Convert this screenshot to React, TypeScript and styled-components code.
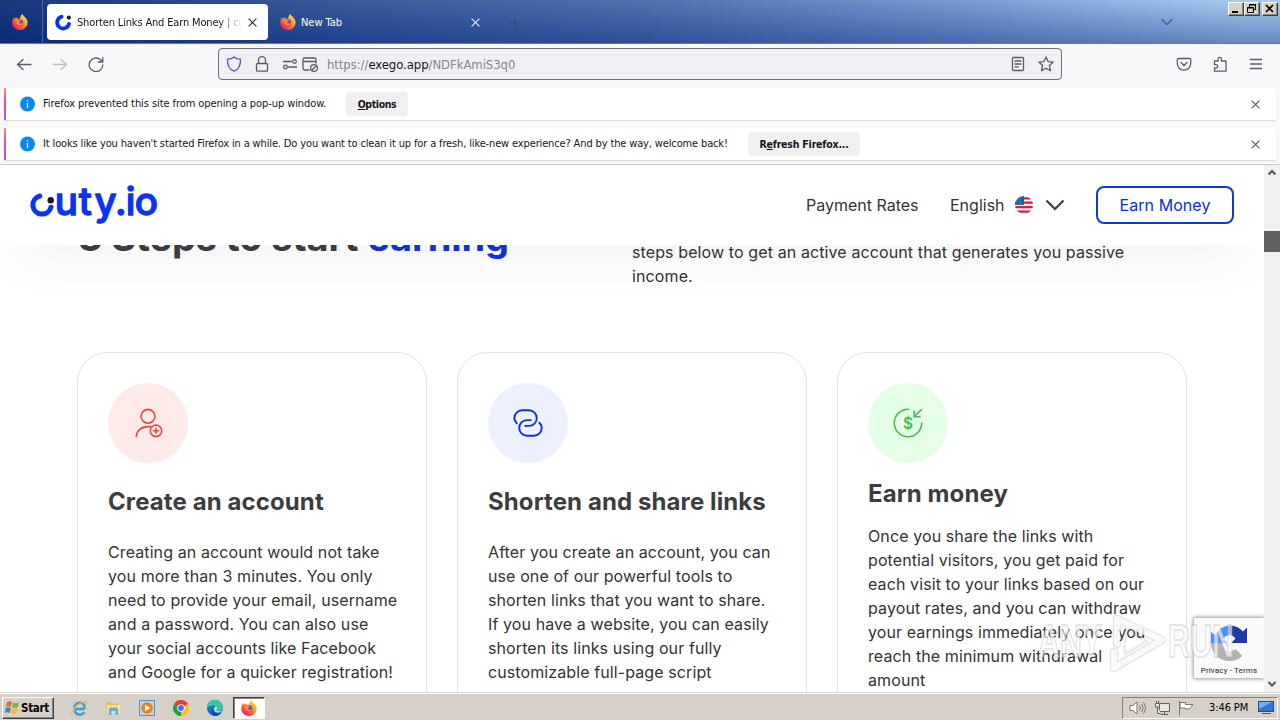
import React from "react";
import styled, { createGlobalStyle } from "styled-components";

const Global = createGlobalStyle`
  * { box-sizing: border-box; }
  body { margin: 0; overflow: hidden; background: #fff; }
  svg { display: block; flex: none; }
  p, h1, h2 { margin: 0; }
`;

const ui = `"DejaVu Sans Condensed", "DejaVu Sans", sans-serif`;

const Desktop = styled.div`
  width: 1280px;
  height: 720px;
  display: flex;
  flex-direction: column;
  overflow: hidden;
  font-family: Inter, sans-serif;
  color: #333;
`;

/* ---------- browser chrome ---------- */

const TabStrip = styled.div`
  height: 44px;
  flex: none;
  display: flex;
  align-items: flex-start;
  border-bottom: 1px solid #6c7590;
  background:
    linear-gradient(180deg, rgba(255, 255, 255, 0.06), rgba(10, 45, 130, 0.42)),
    linear-gradient(92deg, #0c2c74 0%, #14357c 8%, #2c4e93 25%, #4668a8 50%, #7195cd 75%, #a3c9f0 97%);
  font-family: ${ui};
`;

const PinnedArea = styled.div`
  width: 43px;
  height: 43px;
  padding: 14px 0 0 12px;
  border-right: 1px solid #4c62a0;
`;

const Tab = styled.div<{ $active?: boolean; $width: number }>`
  width: ${(p) => p.$width}px;
  height: 36px;
  margin: 4px 0 0 4px;
  padding: 0 11px 0 8px;
  display: flex;
  align-items: center;
  gap: 5px;
  border-radius: 4px;
  font-size: 11px;
  color: ${(p) => (p.$active ? "#15141a" : "#fff")};
  background: ${(p) => (p.$active ? "#fff" : "transparent")};
`;

const TabTitle = styled.span<{ $fade?: boolean; $track: number }>`
  flex: 1;
  margin-top: 2px;
  overflow: hidden;
  white-space: nowrap;
  line-height: 16px;
  letter-spacing: ${(p) => p.$track}px;
  ${(p) => p.$fade && "mask-image: linear-gradient(90deg, #000 85%, transparent 100%);"}
`;

const NewTabButton = styled.div`
  padding: 18px 0 0 19px;
`;

const TabListButton = styled.div`
  margin: 18px 55px 0 auto;
`;

const WindowButtons = styled.div`
  display: flex;
  padding: 2px 2px 0 0;
`;

const WindowButton = styled.div<{ $gap?: number }>`
  width: 16px;
  height: 14px;
  margin-left: ${(p) => p.$gap ?? 0}px;
  background: #d6d2c8;
  border: 1px solid;
  border-color: #fff #404040 #404040 #fff;
  box-shadow: inset -1px -1px 0 #8a867e;
`;

const Toolbar = styled.div`
  height: 40px;
  flex: none;
  display: flex;
  align-items: center;
  background: #f8f8fb;
  padding: 0 16px;
`;

const NavButtons = styled.div`
  width: 202px;
  display: flex;
  gap: 20px;
`;

const AddressBar = styled.div`
  width: 844px;
  height: 32px;
  display: flex;
  align-items: center;
  padding: 0 7px;
  border: 1px solid #6f6f7a;
  border-radius: 4px;
  background: #f0f0f4;
`;

const AddressIcons = styled.div<{ $gap: number }>`
  display: flex;
  align-items: center;
  gap: ${(p) => p.$gap}px;
`;

const SiteIcons = styled.div`
  display: flex;
  gap: 4px;
  margin-left: 12px;
`;

const Url = styled.div`
  flex: 1;
  margin: 2px 0 0 9px;
  font: 13px/18px ${ui};
  letter-spacing: -0.07px;
  color: #85858c;
  white-space: nowrap;
  b { font-weight: 400; color: #15141a; }
`;

const ToolIcons = styled.div`
  display: flex;
  gap: 20px;
  margin-left: auto;
`;

const Notices = styled.div`
  flex: none;
  height: 81px;
  padding: 4px 4px 0;
  display: flex;
  flex-direction: column;
  gap: 8px;
  background: #f8f8fa;
  border-bottom: 1px solid #c9c9cd;
`;

const Notice = styled.div`
  height: 32px;
  flex: none;
  display: flex;
  align-items: center;
  padding: 0 16px 0 13px;
  background: #fff;
  border-left: 2px solid;
  border-image: linear-gradient(180deg, #ff9a5a, #e2489c 45%, #a259f7) 1;
  box-shadow: 0 1px 1px rgba(58, 57, 68, 0.14);
  font: 11px/14px ${ui};
  color: #15141a;
`;

const NoticeText = styled.span<{ $width: number; $track: number }>`
  width: ${(p) => p.$width}px;
  margin-left: 8px;
  white-space: nowrap;
  letter-spacing: ${(p) => p.$track}px;
`;

const NoticeButton = styled.span<{ $width: number; $track: number }>`
  width: ${(p) => p.$width}px;
  height: 24px;
  border-radius: 4px;
  background: #f0f0f1;
  font-weight: 700;
  font-size: 10.5px;
  letter-spacing: ${(p) => p.$track}px;
  line-height: 25px;
  text-align: center;
  white-space: nowrap;
`;

const NoticeClose = styled.div`
  margin-left: auto;
`;

/* ---------- web page ---------- */

const Viewport = styled.div`
  height: 527px;
  flex: none;
  display: flex;
  position: relative;
`;

const Page = styled.div`
  width: 1264px;
  height: 527px;
  overflow: hidden;
  background: #fff;
`;

const SiteHeader = styled.header`
  position: relative;
  z-index: 2;
  height: 80px;
  display: flex;
  align-items: center;
  padding: 0 30px;
  background: #fff;
  box-shadow: 0 28px 56px -22px rgba(0, 0, 0, 0.08);
  font-size: 16px;
  line-height: 24px;
`;

const SiteNav = styled.nav`
  margin-left: auto;
  display: flex;
  align-items: center;
`;

const NavText = styled.span<{ $width: number }>`
  width: ${(p) => p.$width}px;
  white-space: nowrap;
`;

const Chevron = styled.div`
  margin: 0 31px 0 12px;
`;

const EarnButton = styled.button`
  width: 138px;
  height: 38px;
  padding: 0;
  border: 2px solid #0c3ad2;
  border-radius: 8px;
  background: #fff;
  color: #0a2fd6;
  font: 16px/24px Inter, sans-serif;
  letter-spacing: 0.06px;
`;

const Intro = styled.section`
  height: 137px;
  margin-top: -30px;
  padding-left: 78px;
  display: flex;
`;

const Heading = styled.h1`
  width: 554px;
  margin-top: -1px;
  font-size: 38px;
  line-height: 46px;
  font-weight: 700;
  letter-spacing: -0.12px;
  color: #3d3d3f;
  white-space: nowrap;
  span { color: #0f34dc; }
`;

const IntroText = styled.p`
  padding-top: 25px;
  font-size: 16px;
  line-height: 24px;
  letter-spacing: 0.11px;
  white-space: pre;
`;

const Cards = styled.section`
  display: flex;
  gap: 30px;
  padding-left: 77px;
`;

const Card = styled.article`
  width: 350px;
  height: 400px;
  padding: 30px;
  border: 1px solid #e2e2e4;
  border-radius: 30px;
`;

const IconDisc = styled.div<{ $tint: string }>`
  width: 80px;
  height: 80px;
  display: flex;
  align-items: center;
  justify-content: center;
  border-radius: 50%;
  background: ${(p) => p.$tint};
`;

const CardTitle = styled.h2<{ $compact?: boolean }>`
  margin: ${(p) => (p.$compact ? "16px 0 16px" : "24px 0 24px")};
  font-size: 24px;
  line-height: 29px;
  font-weight: 700;
  letter-spacing: 0.1px;
  color: #3d3d3f;
  white-space: nowrap;
`;

const CardText = styled.p`
  font-size: 16px;
  line-height: 24px;
  letter-spacing: 0.1px;
  white-space: pre;
`;

const Scrollbar = styled.div`
  width: 16px;
  display: flex;
  flex-direction: column;
  align-items: center;
  background: #f0f0f0;
`;

const ScrollThumb = styled.div`
  width: 16px;
  height: 21px;
  margin: 50px 0 auto;
  background: #606060;
`;

const Captcha = styled.div`
  position: absolute;
  z-index: 3;
  left: 1194px;
  top: 453px;
  width: 70px;
  height: 60px;
  padding-top: 5px;
  display: flex;
  flex-direction: column;
  align-items: center;
  gap: 3px;
  background: #fafafa;
  box-shadow: 0 0 4px 1px #999;
  clip-path: inset(-6px 0 -6px -6px);
  font: 8px/10px Roboto, sans-serif;
  letter-spacing: 0.15px;
  color: #222;
  white-space: nowrap;
`;

const Watermark = styled.div`
  position: absolute;
  z-index: 4;
  left: 1034px;
  top: 440px;
`;

/* ---------- taskbar ---------- */

const Taskbar = styled.div`
  height: 28px;
  flex: none;
  display: flex;
  align-items: center;
  padding: 2px 2px 0;
  background: #d6d0c8;
  border-top: 1px solid #d9d6cf;
  box-shadow: inset 0 1px 0 #fff;
  font: 11px/14px ${ui};
  color: #000;
`;

const StartButton = styled.div`
  width: 52px;
  height: 22px;
  display: flex;
  align-items: center;
  gap: 0;
  padding-left: 1px;
  border: 1px solid;
  border-color: #fff #404040 #404040 #fff;
  box-shadow: inset -1px -1px 0 #8a867e;
  font-weight: 700;
  font-size: 11.5px;
  letter-spacing: -0.3px;
`;

const QuickLaunch = styled.div`
  display: flex;
  gap: 18px;
  margin-left: 17px;
`;

const ActiveTask = styled.div`
  width: 32px;
  height: 22px;
  margin-left: 10px;
  display: flex;
  align-items: center;
  justify-content: center;
  background: #fff;
  border: 1px solid;
  border-color: #404040 #fff #fff #404040;
  box-shadow: inset 1px 1px 0 #8a867e;
`;

const Tray = styled.div`
  width: 156px;
  height: 22px;
  margin-left: auto;
  display: flex;
  align-items: center;
  gap: 8px;
  padding: 0 2px 0 6px;
  border: 1px solid;
  border-color: #85817a #fff #fff #85817a;
`;

const Clock = styled.span`
  width: 44px;
  margin-left: 7px;
  white-space: nowrap;
  letter-spacing: -0.1px;
`;

/* ---------- drawings ---------- */

const FirefoxIcon = ({ size = 16 }: { size?: number }) => (
  <svg width={size} height={size} viewBox="0 0 16 16">
    <defs>
      <linearGradient id="ffBody" x1="0.85" y1="0.1" x2="0.2" y2="0.9">
        <stop offset="0" stopColor="#ffe14a" />
        <stop offset="0.4" stopColor="#ff9a2c" />
        <stop offset="0.75" stopColor="#ff4a45" />
        <stop offset="1" stopColor="#e8246c" />
      </linearGradient>
    </defs>
    <path d="M10 0c1.2 1.6 2 2.2 3.2 3.4C15 5.200 15.800 7 15.600 9.200 15.200 13 12 16 8 16 3.700 16 .3 12.700.3 8.500c0-2.300.8-4 1.700-5.300L2.300 5 4 3.200 5.500 4.500 8 4.800C8 3 9 1.200 10 0z" fill="url(#ffBody)" />
    <circle cx="7.900" cy="8.700" r="3.400" fill="#7a3fd0" />
    <path d="M3.800 6.300c1-1 2.200-.9 3.200-.3l2 .4c0 1-1.500 1-1.800 1.800-.2 1.200 1.200 1.700 2.300 1.200.8-.4 1.300-.1 1.500.2-.6 1.500-2 2.300-3.600 2.100C5 11.400 3.600 9 3.800 6.300z" fill="#ff8a22" />
  </svg>
);

const CutyMark = () => (
  <svg width="17" height="17" viewBox="0 0 17 17">
    <path d="M6.500 2.700A6 6 0 1 0 14 10" fill="none" stroke="#0a2ff0" strokeWidth="3.800" strokeLinecap="round" />
    <circle cx="13.800" cy="3.600" r="2.100" fill="#20123c" />
  </svg>
);

const CloseGlyph = ({ color, size = 9 }: { color: string; size?: number }) => (
  <svg width={size} height={size} viewBox="0 0 9 9">
    <path d="M.6.6l7.800 7.800M8.400.6L.6 8.400" stroke={color} strokeWidth="1.200" fill="none" />
  </svg>
);

const Stroke = ({ d, color = "#5b5b66", w = 1.3, children }: { d: string; color?: string; w?: number; children?: React.ReactNode }) => (
  <svg width="16" height="16" viewBox="0 0 16 16" fill="none" stroke={color} strokeWidth={w} strokeLinecap="round" strokeLinejoin="round">
    <path d={d} />
    {children}
  </svg>
);

const InfoIcon = () => (
  <svg width="16" height="16" viewBox="0 0 16 16">
    <circle cx="8.500" cy="8" r="7.500" fill="#0a8ae6" />
    <path d="M8.500 7v5M8.500 4v1.400" stroke="#d8f0ff" strokeWidth="1.300" />
  </svg>
);

const CutyLogo = () => (
  <svg width="134" height="44" viewBox="0 0 134 44">
    <path d="M9.800 13A9.200 9.200 0 1 0 21 24.200" fill="none" stroke="#0a33f5" strokeWidth="5" strokeLinecap="round" />
    <circle cx="20.700" cy="17.200" r="3.200" fill="#1c0f45" />
    <text
      x="24.800 48.800 64.500 85 95.700 104.800"
      y="32.200"
      fontFamily="Inter, sans-serif"
      fontSize="38.500"
      fontWeight="500"
      fill="#0a33f5"
      stroke="#0a33f5"
      strokeWidth="1.300"
      strokeLinejoin="round"
    >
      uty.io
    </text>
  </svg>
);

const FlagIcon = () => (
  <svg width="18" height="18" viewBox="0 0 18 18">
    <defs>
      <clipPath id="flagDisc"><circle cx="9" cy="9" r="9" /></clipPath>
    </defs>
    <g clipPath="url(#flagDisc)">
      <rect width="18" height="18" fill="#f4f0f2" />
      <path d="M0 2.300h18M0 6.700h18M0 11.200h18M0 15.700h18" stroke="#d81f3c" strokeWidth="2.200" />
      <rect width="9" height="9" fill="#1f5a9c" />
      <path d="M1 3h6M1 5.500h7M1 8h7M5 1v8" stroke="#7da5cf" strokeWidth=".6" strokeDasharray="1 1.200" />
    </g>
  </svg>
);

const AccountIcon = () => (
  <svg width="32" height="32" viewBox="0 0 32 32" fill="none" stroke="#e2483f" strokeWidth="1.600" strokeLinecap="round">
    <circle cx="16" cy="9.300" r="6.900" />
    <path d="M4.300 29.500C4.600 23.500 9.500 19.600 16 19.600h2.600" />
    <circle cx="24" cy="23.800" r="5.700" />
    <path d="M24 21.300v5M21.500 23.800h5" />
  </svg>
);

const LinkIcon = () => (
  <svg width="32" height="32" viewBox="0 0 32 32" fill="none" stroke="#1230d8" strokeWidth="1.900" strokeLinecap="round">
    <path d="M4.700 16.300C3 14.800 2.300 13 2.300 11.100A7.800 7.800 0 0 1 10.100 3.300H17A7.800 7.800 0 0 1 17 18.900H13.200" />
    <path d="M27.300 15.700C29 17.200 29.700 19 29.700 20.900A7.800 7.800 0 0 1 21.900 28.700H15A7.800 7.800 0 0 1 15 13.100H18.800" />
  </svg>
);

const MoneyIcon = () => (
  <svg width="32" height="32" viewBox="0 0 32 32" fill="none" stroke="#45bb55" strokeWidth="1.600" strokeLinecap="round">
    <path d="M16.500 2.300A13.700 13.700 0 1 0 29.700 16" />
    <path d="M29.500 2.500L22.200 9.700M22.200 4v5.700h5.800" />
    <text x="16" y="21.500" textAnchor="middle" fontFamily="Inter, sans-serif" fontSize="15.500" fontWeight="600" fill="#3fbf50" stroke="none">$</text>
  </svg>
);

const CaptchaLogo = () => (
  <svg width="40" height="40" viewBox="0 0 40 40">
    <path d="M20 2.500V12a9 9 0 0 0-6 4l4 4H2V9l4 3A18 18 0 0 1 20 2.500z" fill="#4a90ee" />
    <path d="M20 2.500a18 18 0 0 1 14 6L38 4.500V20H22l4.500-4.500A8 8 0 0 0 20 12z" fill="#1c3aa9" />
    <path d="M2 20h12c0 4.500 3 8 7.500 8 2 0 4-.7 5-2l7 7A18 18 0 0 1 20 38C10 38 2 30 2 20z" fill="#b3b3b3" />
  </svg>
);

const AnyRunMark = () => (
  <svg width="204" height="76" viewBox="0 0 204 76">
    <g fill="none" strokeLinejoin="round" strokeLinecap="round">
      <path d="M83 39V14L128 35 80 63V47" stroke="#888" strokeOpacity="0.22" strokeWidth="8.500" />
      <path d="M83 39V14L128 35 80 63V47" stroke="#fff" strokeOpacity="0.75" strokeWidth="6" />
      <path d="M91 24v25l22-13z" stroke="#888" strokeOpacity="0.16" strokeWidth="3" />
    </g>
    <g fill="#fff" fillOpacity="0.65" stroke="#888" strokeOpacity="0.24" strokeWidth="1.800" fontFamily="Liberation Sans, Arial, sans-serif" fontSize="46" fontWeight="700">
      <text x="4" y="52" textLength="64" lengthAdjust="spacingAndGlyphs">ANY</text>
      <text x="134" y="52" textLength="66" lengthAdjust="spacingAndGlyphs">RUN</text>
    </g>
  </svg>
);

const ScrollArrow = ({ up }: { up?: boolean }) => (
  <svg width="16" height="16" viewBox="0 0 16 16">
    <path d={up ? "M4.500 9.500L8 6l3.500 3.500" : "M4.500 6L8 9.500 11.500 6"} stroke="#555" strokeWidth="2" fill="none" />
  </svg>
);

const WindowsFlag = () => (
  <svg width="17" height="17" viewBox="0 0 17 17">
    <path d="M3 3c2-1.300 3.500-1 5 0L7 8C5.500 7 4 7 2 8z" fill="#ec6a35" />
    <path d="M9 3.500c2 1 3.500 1 6-.3L14 8c-2 1.200-4 1.200-6 .2z" fill="#7eb845" />
    <path d="M1.800 9c2-1 3.500-1 5 0l-1 5c-1.500-1-3-1-5 0z" fill="#3f85cf" />
    <path d="M7.800 9.300c2 1 4 1 6-.2l-1 5c-2 1.200-4 1.200-6 .2z" fill="#f3bd3a" />
  </svg>
);

const IeIcon = () => (
  <svg width="16" height="16" viewBox="0 0 16 16" fill="none">
    <path d="M13.500 9H3.500A5.200 5.200 0 1 1 13.700 8.500M3.800 10.500a5 5 0 0 0 9.400 1.500" stroke="#3aa0dc" strokeWidth="2.400" />
    <path d="M1 14.500C-.5 11 9 1 14.800 1.500c1 1 .3 2.500-.5 3.500" stroke="#e8b93c" strokeWidth="1.200" />
  </svg>
);

const FolderIcon = () => (
  <svg width="16" height="16" viewBox="0 0 16 16">
    <path d="M1 2h5l1 1.500h7V13H1z" fill="#e3c05a" />
    <path d="M2 5h13v8H2z" fill="#f6e196" />
    <path d="M4 15V9.500C4 8 5 7.500 6 7.500h5c1.200 0 2 .7 2 2V15h-2.500v-4h-4v4z" fill="#5fb0e0" />
  </svg>
);

const PlayerIcon = () => (
  <svg width="16" height="16" viewBox="0 0 16 16">
    <rect x=".5" y=".5" width="15" height="15" fill="#b5d5f0" stroke="#5d91c4" />
    <circle cx="8" cy="8" r="5.800" fill="#f08018" />
    <path d="M6 4.800v6.400L11.300 8z" fill="#fff" />
  </svg>
);

const ChromeIcon = () => (
  <svg width="16" height="16" viewBox="0 0 16 16">
    <path d="M8 8L1.070 4A8 8 0 0 1 14.930 4z" fill="#e33b2e" />
    <path d="M8 8L14.930 4A8 8 0 0 1 8 16z" fill="#fbc116" />
    <path d="M8 8V16A8 8 0 0 1 1.070 4z" fill="#279847" />
    <circle cx="8" cy="8" r="3.800" fill="#fff" />
    <circle cx="8" cy="8" r="2.900" fill="#3a78e8" />
  </svg>
);

const EdgeIcon = () => (
  <svg width="16" height="16" viewBox="0 0 16 16">
    <circle cx="8" cy="8" r="8" fill="#1272c4" />
    <path d="M0 8a8 8 0 0 1 16-.5c0 2.500-2 3.500-4 3.500-1.800 0-2.800-.8-2-1.800C11 7 9 5.500 6.500 5.500 3.500 5.500 1 6.500 0 8z" fill="#37c4a4" />
    <path d="M6 8.500C5.500 11 7.500 13.500 10.500 13.500c1.500 0 3-.5 4-1.200-1.500 2.500-4 3.700-6.500 3.700C4.500 15.500 3.500 11 6 8.500z" fill="#0d4c98" />
    <path d="M9.800 9.200C11 7.500 9.500 6 7.800 6.800 6.500 8 6.500 10.500 8.500 12c2 1 5 .8 7-1-1.500.5-3 .3-4 0-1.700 0-2.200-1-1.700-1.800z" fill="#d6d0c8" />
  </svg>
);

const cards = [
  {
    title: "Create an account",
    tint: "#ffeaea",
    icon: <AccountIcon />,
    text: "Creating an account would not take\nyou more than 3 minutes. You only\nneed to provide your email, username\nand a password. You can also use\nyour social accounts like Facebook\nand Google for a quicker registration!",
  },
  {
    title: "Shorten and share links",
    tint: "#ecf0ff",
    icon: <LinkIcon />,
    text: "After you create an account, you can\nuse one of our powerful tools to\nshorten links that you want to share.\nIf you have a website, you can easily\nshorten its links using our fully\ncustomizable full-page script",
  },
  {
    title: "Earn money",
    tint: "#e5ffe7",
    icon: <MoneyIcon />,
    compact: true,
    text: "Once you share the links with\npotential visitors, you get paid for\neach visit to your links based on our\npayout rates, and you can withdraw\nyour earnings immediately once you\nreach the minimum withdrawal\namount",
  },
];

export default function App() {
  return (
    <Desktop>
      <Global />
      <TabStrip>
        <PinnedArea><FirefoxIcon /></PinnedArea>
        <Tab $active $width={221}>
          <CutyMark />
          <TabTitle $fade $track={-0.16}>Shorten Links And Earn Money | cuty</TabTitle>
          <CloseGlyph color="#333" />
        </Tab>
        <Tab $width={219}>
          <FirefoxIcon />
          <TabTitle $track={-0.05}>New Tab</TabTitle>
          <CloseGlyph color="#e6ecfa" />
        </Tab>
        <NewTabButton>
          <svg width="10" height="10" viewBox="0 0 10 10"><path d="M5 0v10M0 5h10" stroke="#3c4c73" strokeWidth="1.300" /></svg>
        </NewTabButton>
        <TabListButton>
          <svg width="12" height="8" viewBox="0 0 12 8"><path d="M.5 1L6 6.500 11.500 1" stroke="#45618f" strokeWidth="1.400" fill="none" /></svg>
        </TabListButton>
        <WindowButtons>
          <WindowButton>
            <svg width="14" height="12"><path d="M3 9h6" stroke="#000" strokeWidth="2" /></svg>
          </WindowButton>
          <WindowButton>
            <svg width="14" height="12" fill="none" stroke="#000"><path d="M4.500 4V1.500h6v5H8.500M4 2h7" /><path d="M2.500 4.500h6v5h-6zM2 5h7" /></svg>
          </WindowButton>
          <WindowButton $gap={2}>
            <svg width="14" height="12"><path d="M3 2l7 7M10 2L3 9" stroke="#000" strokeWidth="1.700" /></svg>
          </WindowButton>
        </WindowButtons>
      </TabStrip>

      <Toolbar>
        <NavButtons>
          <Stroke d="M15 8.500H1.500M7 3.500l-5.500 5 5.500 5" />
          <Stroke d="M1 8.500h13.500M9 3.500l5.500 5-5.500 5" color="#bfbfc6" />
          <Stroke d="M14.800 9A6.800 6.800 0 1 1 12.500 3.700L14 5.200M14.800 1.500v4.500h-4.500" />
        </NavButtons>
        <AddressBar>
          <AddressIcons $gap={12}>
            <Stroke d="M8 .9C6.500 2.300 4 3 1.500 3.200 1.300 9 3.500 13.500 8 15.200 12.500 13.500 14.700 9 14.500 3.200 12 3 9.500 2.300 8 .9z" color="#5a55c8" />
            <Stroke d="M3.500 7.500h9a1 1 0 0 1 1 1v5.700a1 1 0 0 1-1 1h-9a1 1 0 0 1-1-1V8.500a1 1 0 0 1 1-1zM4.500 7.500V4.200a3.500 3.500 0 0 1 7 0v3.300" />
          </AddressIcons>
          <SiteIcons>
            <Stroke d="M1.500 5.500h8M6.500 11h8"><circle cx="12.500" cy="5.500" r="1.800" /><circle cx="3.500" cy="11" r="1.800" /></Stroke>
            <Stroke d="M7 14H2.500A1.500 1.500 0 0 1 1 12.500v-9A1.500 1.500 0 0 1 2.500 2h10A1.500 1.500 0 0 1 14 3.500V7M1 5.500h13"><circle cx="12" cy="12" r="3.400" /><path d="M9.700 14.300l4.600-4.600" /></Stroke>
          </SiteIcons>
          <Url>https://<b>exego.app</b>/NDFkAmiS3q0</Url>
          <AddressIcons $gap={12}>
            <Stroke d="M3.500 1.500h9a1 1 0 0 1 1 1v11a1 1 0 0 1-1 1h-9a1 1 0 0 1-1-1v-11a1 1 0 0 1 1-1zM5 5h6M5 8h6M5 10.800h3.500" />
            <Stroke d="M8 .9l2.100 4.700 5.100.5-3.800 3.500 1.100 5.200L8 12.200l-4.500 2.600 1.100-5.200L.8 6.100l5.100-.5z" />
          </AddressIcons>
        </AddressBar>
        <ToolIcons>
          <Stroke d="M2.500 2.500h11a1.200 1.200 0 0 1 1.200 1.200V7.500a6.700 6.700 0 0 1-13.400 0V3.700a1.200 1.200 0 0 1 1.200-1.200zM5 6.500l3 3 3-3" />
          <Stroke d="M2.500 5H6V3a1.700 1.700 0 0 1 3.400 0v2H14v10.200H2.500V12H4a1.700 1.700 0 0 0 0-3.400H2.500z" />
          <Stroke d="M2.500 3.500h11M2.500 8h11M2.500 12.500h11" />
        </ToolIcons>
      </Toolbar>

      <Notices>
        <Notice>
          <InfoIcon />
          <NoticeText $width={303} $track={-0.08}>Firefox prevented this site from opening a pop-up window.</NoticeText>
          <NoticeButton $width={62} $track={-0.4}><u>O</u>ptions</NoticeButton>
          <NoticeClose><CloseGlyph color="#5b5b66" /></NoticeClose>
        </Notice>
        <Notice>
          <InfoIcon />
          <NoticeText $width={705} $track={-0.14}>It looks like you haven't started Firefox in a while. Do you want to clean it up for a fresh, like-new experience? And by the way, welcome back!</NoticeText>
          <NoticeButton $width={112} $track={-0.2}>R<u>e</u>fresh Firefox...</NoticeButton>
          <NoticeClose><CloseGlyph color="#5b5b66" /></NoticeClose>
        </Notice>
      </Notices>

      <Viewport>
        <Page>
          <SiteHeader>
            <CutyLogo />
            <SiteNav>
              <NavText $width={144}>Payment Rates</NavText>
              <NavText $width={65}>English</NavText>
              <FlagIcon />
              <Chevron>
                <svg width="20" height="12" viewBox="0 0 20 12"><path d="M1.500 1.500L10 10l8.500-8.500" stroke="#3c3c3e" strokeWidth="2.200" fill="none" /></svg>
              </Chevron>
              <EarnButton>Earn Money</EarnButton>
            </SiteNav>
          </SiteHeader>
          <Intro>
            <Heading>3 Steps to start <span>earning</span></Heading>
            <IntroText>{"steps below to get an active account that generates you passive\nincome."}</IntroText>
          </Intro>
          <Cards>
            {cards.map((c) => (
              <Card key={c.title}>
                <IconDisc $tint={c.tint}>{c.icon}</IconDisc>
                <CardTitle $compact={c.compact}>{c.title}</CardTitle>
                <CardText>{c.text}</CardText>
              </Card>
            ))}
          </Cards>
        </Page>
        <Scrollbar>
          <ScrollArrow up />
          <ScrollThumb />
          <ScrollArrow />
        </Scrollbar>
        <Captcha>
          <CaptchaLogo />
          Privacy - Terms
        </Captcha>
        <Watermark><AnyRunMark /></Watermark>
      </Viewport>

      <Taskbar>
        <StartButton><WindowsFlag />Start</StartButton>
        <QuickLaunch>
          <IeIcon /><FolderIcon /><PlayerIcon /><ChromeIcon /><EdgeIcon />
        </QuickLaunch>
        <ActiveTask><FirefoxIcon /></ActiveTask>
        <Tray>
          <svg width="17" height="16" viewBox="0 0 17 16" fill="#fff" stroke="#77736c"><path d="M1 5.500h3L8 2v12L4 10.500H1z" /><path d="M10.500 5.500c1 1.500 1 3.500 0 5M12.500 4c2 2.500 2 5.500 0 8M14.500 2.500c2.500 3.500 2.500 7.500 0 11" fill="none" /></svg>
          <svg width="16" height="16" viewBox="0 0 16 16" fill="#e8e6e0" stroke="#66625c"><path d="M5.500 3.500h10v8h-10zM7 14.500h7M10.500 12v2" /><path d="M1.500 3.500h4V7h-4zM2.500 1v2M4.500 1v2M3.500 7v6.500H7" /></svg>
          <svg width="16" height="16" viewBox="0 0 16 16" fill="#fff" stroke="#77736c"><path d="M1.500 1v14.500M2 2.500h5.500v2H15L12.500 7.500 11 9H7V8H2z" /></svg>
          <Clock>3:46 PM</Clock>
          <svg width="17" height="15" viewBox="0 0 17 15"><rect x=".5" y="1.500" width="15" height="10" fill="#2f76cf" stroke="#2a4c8a" /><path d="M1 2h13L1 9z" fill="#6fb0ee" /><path d="M4 13.500h9" stroke="#555" /></svg>
        </Tray>
      </Taskbar>
    </Desktop>
  );
}
